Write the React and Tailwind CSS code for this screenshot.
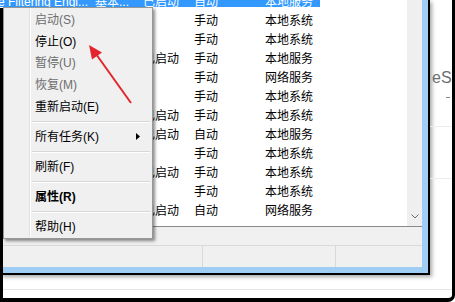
const rows = [
  { name: 'e Filtering Engi...', desc: '基本...', status: '已启动', type: '自动', logon: '本地服务', selected: true },
  { status: '', type: '手动', logon: '本地系统' },
  { status: '', type: '手动', logon: '本地系统' },
  { status: '已启动', type: '手动', logon: '本地服务' },
  { status: '', type: '手动', logon: '网络服务' },
  { status: '', type: '手动', logon: '本地系统' },
  { status: '已启动', type: '手动', logon: '本地系统' },
  { status: '已启动', type: '自动', logon: '本地服务' },
  { status: '', type: '手动', logon: '本地系统' },
  { status: '已启动', type: '手动', logon: '本地系统' },
  { status: '', type: '手动', logon: '本地系统' },
  { status: '已启动', type: '自动', logon: '网络服务' },
];

const menuItems = [
  { label: '启动(S)', disabled: true },
  { label: '停止(O)' },
  { label: '暂停(U)', disabled: true },
  { label: '恢复(M)', disabled: true },
  { label: '重新启动(E)' },
  { sep: true },
  { label: '所有任务(K)', sub: true },
  { sep: true },
  { label: '刷新(F)' },
  { sep: true },
  { label: '属性(R)', bold: true },
  { sep: true },
  { label: '帮助(H)' },
];

function Row({ r }) {
  return (
    <div
      className={
        r.selected
          ? 'flex h-[19px] w-[320px] shrink-0 whitespace-nowrap bg-[#3399ff] pt-[7px] leading-[14px] text-white'
          : 'flex h-[19px] w-[320px] shrink-0 whitespace-nowrap pt-[7px] leading-[14px] text-black'
      }
    >
      <div className="w-[95px] shrink-0">
        <span className="-ml-[2px]">{r.name || ''}</span>
      </div>
      <div className="w-[48px] shrink-0">{r.desc || ''}</div>
      <div className="w-[51px] shrink-0">{r.status}</div>
      <div className="w-[71px] shrink-0">{r.type}</div>
      <div className="w-[55px] shrink-0">{r.logon}</div>
    </div>
  );
}

function InnerWindow() {
  return (
    <div className="flex h-[275px] w-[430px] shrink-0 flex-col border-r-2 border-b-2 border-black bg-[#9fcdf3] pr-[6px] pb-[6px] shadow-[2px_2px_4px_rgba(0,0,0,0.35)]">
      <div className="flex h-[267px] w-[422px] flex-col bg-[#f0f0f0]">
        <div className="flex h-[226px]">
          <div className="h-full w-[407px] overflow-hidden bg-white">
            <div className="-mt-[12px] flex flex-col">
              {rows.map((r, i) => (
                <Row key={i} r={r} />
              ))}
            </div>
          </div>
          <div className="flex h-full w-[15px] flex-col items-center justify-end bg-[#efefef]">
            <div className="flex h-[20px] w-full items-center justify-center">
              <svg width="8" height="5" viewBox="0 0 8 5">
                <path d="M0.5 0.5 L4 4 L7.5 0.5" fill="none" stroke="#6a6a6a" strokeWidth="1" />
              </svg>
            </div>
          </div>
        </div>
        <div className="h-px bg-[#8a8a8a]" />
        <div className="h-[19px] border-b border-[#d9d9d9]" />
        <div className="flex flex-1">
          <div className="w-[203px] border-r border-[#d9d9d9]" />
          <div className="w-[133px] border-r border-[#d9d9d9]" />
          <div className="flex-1" />
        </div>
      </div>
    </div>
  );
}

function RightStrip() {
  return (
    <div className="flex h-[275px] w-[22px] shrink-0 flex-col overflow-hidden">
      <div className="h-[127px] shrink-0 border-b border-[#ececec] pt-[70px] pl-[2px]">
        <div className="whitespace-nowrap text-[16px] leading-[16px] text-[#6e6e6e]">eS</div>
        <div className="mt-[11px] ml-[14px] h-px w-[4px] bg-[#8a8a8a]" />
      </div>
      <div className="h-[52px] shrink-0 border-b border-[#ececec]" />
      <div className="flex-1" />
    </div>
  );
}

function ContextMenu() {
  return (
    <div className="absolute left-[3px] top-[7px] flex w-[150px] border border-[#979797] bg-[#f0f0f0] py-px shadow-[2px_2px_3px_rgba(0,0,0,0.45)]">
      <div className="w-[26px] shrink-0 border-r border-[#e0e0e0]" />
      <div className="w-px shrink-0 bg-white" />
      <div className="flex flex-1 flex-col">
        {menuItems.map((m, i) =>
          m.sep ? (
            <div key={i} className="ml-px mr-[2px] flex h-[8.3px] flex-col justify-center">
              <div className="h-px bg-[#d7d7d7]" />
              <div className="h-px bg-white" />
            </div>
          ) : (
            <div
              key={i}
              className={
                m.disabled
                  ? 'flex h-[21.7px] items-center justify-between pl-[4px] pr-[12px] leading-[14px] text-[#6d6d6d]'
                  : m.bold
                  ? 'flex h-[21.7px] items-center justify-between pl-[4px] pr-[12px] font-bold leading-[14px] text-black'
                  : 'flex h-[21.7px] items-center justify-between pl-[4px] pr-[12px] leading-[14px] text-black'
              }
            >
              <span>{m.label}</span>
              {m.sub && (
                <svg width="4" height="7" viewBox="0 0 4 7">
                  <polygon points="0,0 4,3.5 0,7" fill="#000" />
                </svg>
              )}
            </div>
          )
        )}
      </div>
    </div>
  );
}

function Arrow() {
  return (
    <svg className="pointer-events-none absolute left-0 top-0" width="455" height="302">
      <line x1="131" y1="103" x2="96" y2="54" stroke="#e3262d" strokeWidth="2" />
      <polygon points="89,45 102,52.5 92,59.5" fill="#e3262d" />
    </svg>
  );
}

export default function App() {
  return (
    <div className="relative h-[302px] w-[455px] overflow-hidden bg-white font-['Liberation_Sans','Noto_Sans_CJK_SC',sans-serif] text-[12px]">
      <div className="flex h-full w-full flex-col overflow-hidden rounded-br-[7px] border-r-[3px] border-b-[4px] border-black">
        <div className="flex">
          <InnerWindow />
          <RightStrip />
        </div>
        <div className="flex flex-1 flex-col">
          <div className="h-[14px]" />
          <div className="h-px bg-[#e6e6e6]" />
        </div>
      </div>
      <div className="absolute bottom-0 left-0 top-[8px] w-[3px] bg-black" />
      <ContextMenu />
      <Arrow />
    </div>
  );
}
